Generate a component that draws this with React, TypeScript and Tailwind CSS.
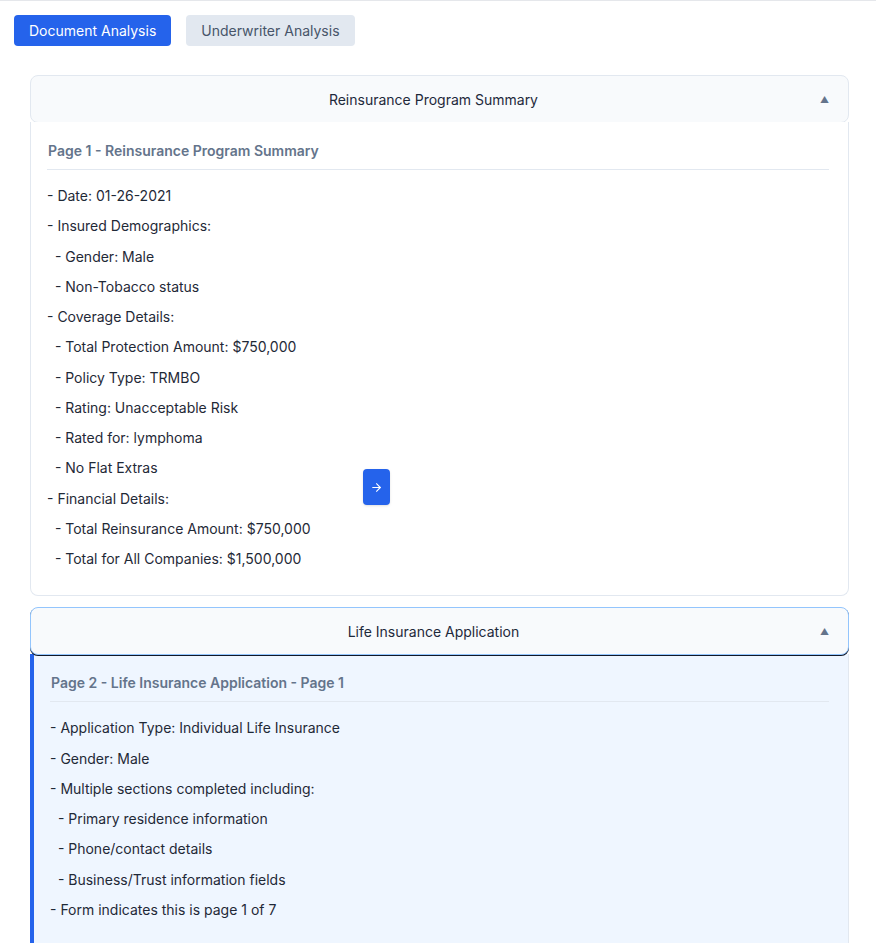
import { ArrowRight } from 'lucide-react'

const page1 = [
  '- Date: 01-26-2021',
  '- Insured Demographics:',
  '  - Gender: Male',
  '  - Non-Tobacco status',
  '- Coverage Details:',
  '  - Total Protection Amount: $750,000',
  '  - Policy Type: TRMBO',
  '  - Rating: Unacceptable Risk',
  '  - Rated for: lymphoma',
  '  - No Flat Extras',
  '- Financial Details:',
  '  - Total Reinsurance Amount: $750,000',
  '  - Total for All Companies: $1,500,000',
]

const page2 = [
  '- Application Type: Individual Life Insurance',
  '- Gender: Male',
  '- Multiple sections completed including:',
  '  - Primary residence information',
  '  - Phone/contact details',
  '  - Business/Trust information fields',
  '- Form indicates this is page 1 of 7',
]

function Lines({ items }: { items: string[] }) {
  return (
    <div>
      {items.map((line, i) => (
        <p key={i} className="whitespace-pre-wrap py-[4px] text-sm leading-[22.25px] text-[#1f2937]">
          {line}
        </p>
      ))}
    </div>
  )
}

export default function App() {
  return (
    <div
      className="min-h-[943px] border-t border-[#e5e7eb] bg-white"
      style={{ fontFamily: 'Inter, "Noto Sans", sans-serif' }}
    >
      {/* Tabs */}
      <div className="flex gap-[15px] px-[14px] pt-[14px]">
        <button className="h-[31px] rounded-[4px] bg-[#2563eb] px-[15px] text-sm text-white">
          Document Analysis
        </button>
        <button className="h-[31px] rounded-[4px] bg-[#e2e8f0] px-[15px] text-sm text-[#475569]">
          Underwriter Analysis
        </button>
      </div>

      <div className="ml-[30px] mt-[29px] flex w-[819px] flex-col gap-[11px]">
        {/* Card 1 */}
        <div className="relative">
          <div className="flex h-[48px] items-center rounded-lg border border-[#e2e8f0] bg-[#f8fafc] pl-4 pr-[19px] pt-[1px]">
            <span className="flex-1 text-center text-sm text-[#1e293b]">Reinsurance Program Summary</span>
            <span className="text-[9px] text-[#64748b]">▲</span>
          </div>
          <div className="-mt-[1px] rounded-b-lg border-x border-b border-[#e2e8f0] bg-white pb-[21px] pl-4 pr-[19px] pt-[19px]">
            <h3 className="border-b border-[#e2e8f0] pb-[8px] pl-[1px] text-sm font-semibold text-[#64748b]">
              Page 1 - Reinsurance Program Summary
            </h3>
            <div className="mt-[11px]">
              <Lines items={page1} />
            </div>
          </div>
          <button className="absolute left-[333px] top-[394px] flex h-[36px] w-[27px] items-center justify-center rounded-[4px] bg-[#2563eb] text-white shadow-sm">
            <ArrowRight size={13} strokeWidth={2} />
          </button>
        </div>

        {/* Card 2 */}
        <div>
          <div className="relative z-10 flex h-[48px] items-center rounded-lg border border-[#93c5fd] bg-[#f8fafc] pl-4 pr-[19px] pt-[1px] shadow-[0_1px_0_#111827]">
            <span className="flex-1 text-center text-sm text-[#1e293b]">Life Insurance Application</span>
            <span className="text-[9px] text-[#64748b]">▲</span>
          </div>
          <div className="-mt-[1px] border-l-4 border-r border-l-[#2563eb] border-r-[#e2e8f0] bg-[#eff6ff] pb-[24px] pl-4 pr-[19px] pt-[19px]">
            <h3 className="border-b border-[#e2e8f0] pb-[8px] pl-[1px] text-sm font-semibold text-[#64748b]">
              Page 2 - Life Insurance Application - Page 1
            </h3>
            <div className="mt-[11px]">
              <Lines items={page2} />
            </div>
          </div>
        </div>
      </div>
    </div>
  )
}
